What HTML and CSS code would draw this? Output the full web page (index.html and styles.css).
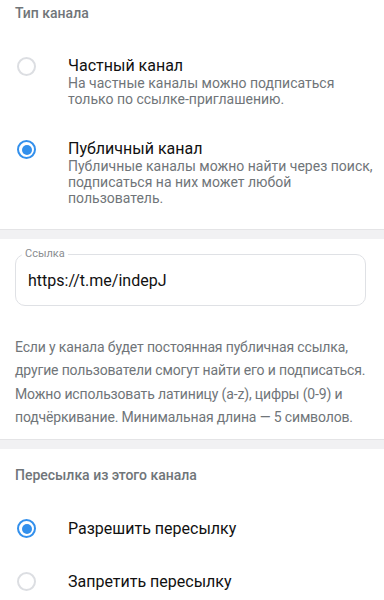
FILE: index.html
```html
<!DOCTYPE html>
<html lang="ru">
<head>
<meta charset="utf-8">
<link rel="stylesheet" href="styles.css">
</head>
<body>
<div class="page">
  <section class="section first">
    <div class="section-title">Тип канала</div>
    <div class="option opt-a">
      <span class="radio"></span>
      <div class="option-text">
        <div class="option-title">Частный канал</div>
        <div class="option-desc">На частные каналы можно подписаться<br>только по ссылке-приглашению.</div>
      </div>
    </div>
    <div class="option opt-b">
      <span class="radio checked"></span>
      <div class="option-text">
        <div class="option-title">Публичный канал</div>
        <div class="option-desc">Публичные каналы можно найти через поиск,<br>подписаться на них может любой<br>пользователь.</div>
      </div>
    </div>
  </section>
  <div class="divider"></div>
  <section class="section link-section">
    <div class="field">
      <span class="field-label">Ссылка</span>
      <div class="field-value">https://t.me/indepJ</div>
    </div>
    <p class="help">Если у канала будет постоянная публичная ссылка,<br>другие пользователи смогут найти его и подписаться.<br>Можно использовать латиницу (a-z), цифры (0-9) и<br>подчёркивание. Минимальная длина — 5 символов.</p>
  </section>
  <div class="divider"></div>
  <section class="section">
    <div class="section-title fwd-title">Пересылка из этого канала</div>
    <div class="option simple opt-c">
      <span class="radio checked"></span>
      <div class="option-title">Разрешить пересылку</div>
    </div>
    <div class="option simple opt-d">
      <span class="radio"></span>
      <div class="option-title">Запретить пересылку</div>
    </div>
  </section>
</div>
</body>
</html>
```

FILE: styles.css
```css
* { box-sizing: border-box; }
html, body { margin: 0; padding: 0; background: #fff; }
body {
  font-family: Roboto, "Noto Sans", "Liberation Sans", sans-serif;
  color: #111;
  width: 384px;
  height: 600px;
  overflow: hidden;
}
.page { display: flex; flex-direction: column; }
.section-title {
  padding: 3px 15px 0;
  line-height: 20px;
  font-size: 14px;
  font-weight: 500;
  color: #707579;
}
.option {
  display: flex;
  align-items: flex-start;
  padding-left: 17px;
}
.radio {
  flex: none;
  width: 19px;
  height: 19px;
  border-radius: 50%;
  border: 2px solid #dcdee2;
  margin-top: 1px;
  margin-right: 32px;
  position: relative;
}
.radio.checked { border-color: #3390ec; }
.radio.checked::after {
  content: "";
  position: absolute;
  left: 2.5px; top: 2.5px;
  width: 10px; height: 10px;
  border-radius: 50%;
  background: #3390ec;
}
.option-title {
  font-size: 16px;
  line-height: 20px;
  color: #111;
}
.option-desc {
  font-size: 14px;
  line-height: 15.7px;
  color: #707579;
}
.opt-a { margin-top: 33px; }
.opt-b { margin-top: 32px; }
.divider {
  margin-top: 22px;
  height: 10px;
  background: #f1f1f3;
  border-top: 1px solid #e4e4e6;
}
.link-section { padding-top: 15px; }
.field {
  position: relative;
  margin: 0 18px 0 15px;
  height: 52px;
  border: 1px solid #dfe1e5;
  border-radius: 10px;
  display: flex;
  align-items: center;
  padding-left: 12px;
}
.field-label {
  position: absolute;
  top: -8px;
  left: 6px;
  padding: 0 3px;
  background: #fff;
  font-size: 11px;
  line-height: 14px;
  color: #8a8d91;
}
.field-value {
  font-size: 16px;
  line-height: 20px;
  color: #111;
  margin-top: 2px;
}
.help {
  margin: 30px 0 0 15px;
  font-size: 14px;
  line-height: 23.6px;
  color: #707579;
  white-space: nowrap;
  letter-spacing: -0.15px;
}
.link-section + .divider { margin-top: 9px; }
.fwd-title { padding-top: 16px; }
.simple { align-items: center; }
.simple .radio { margin-top: 0; }
.opt-c { margin-top: 34px; }
.opt-d { margin-top: 33px; }
```
